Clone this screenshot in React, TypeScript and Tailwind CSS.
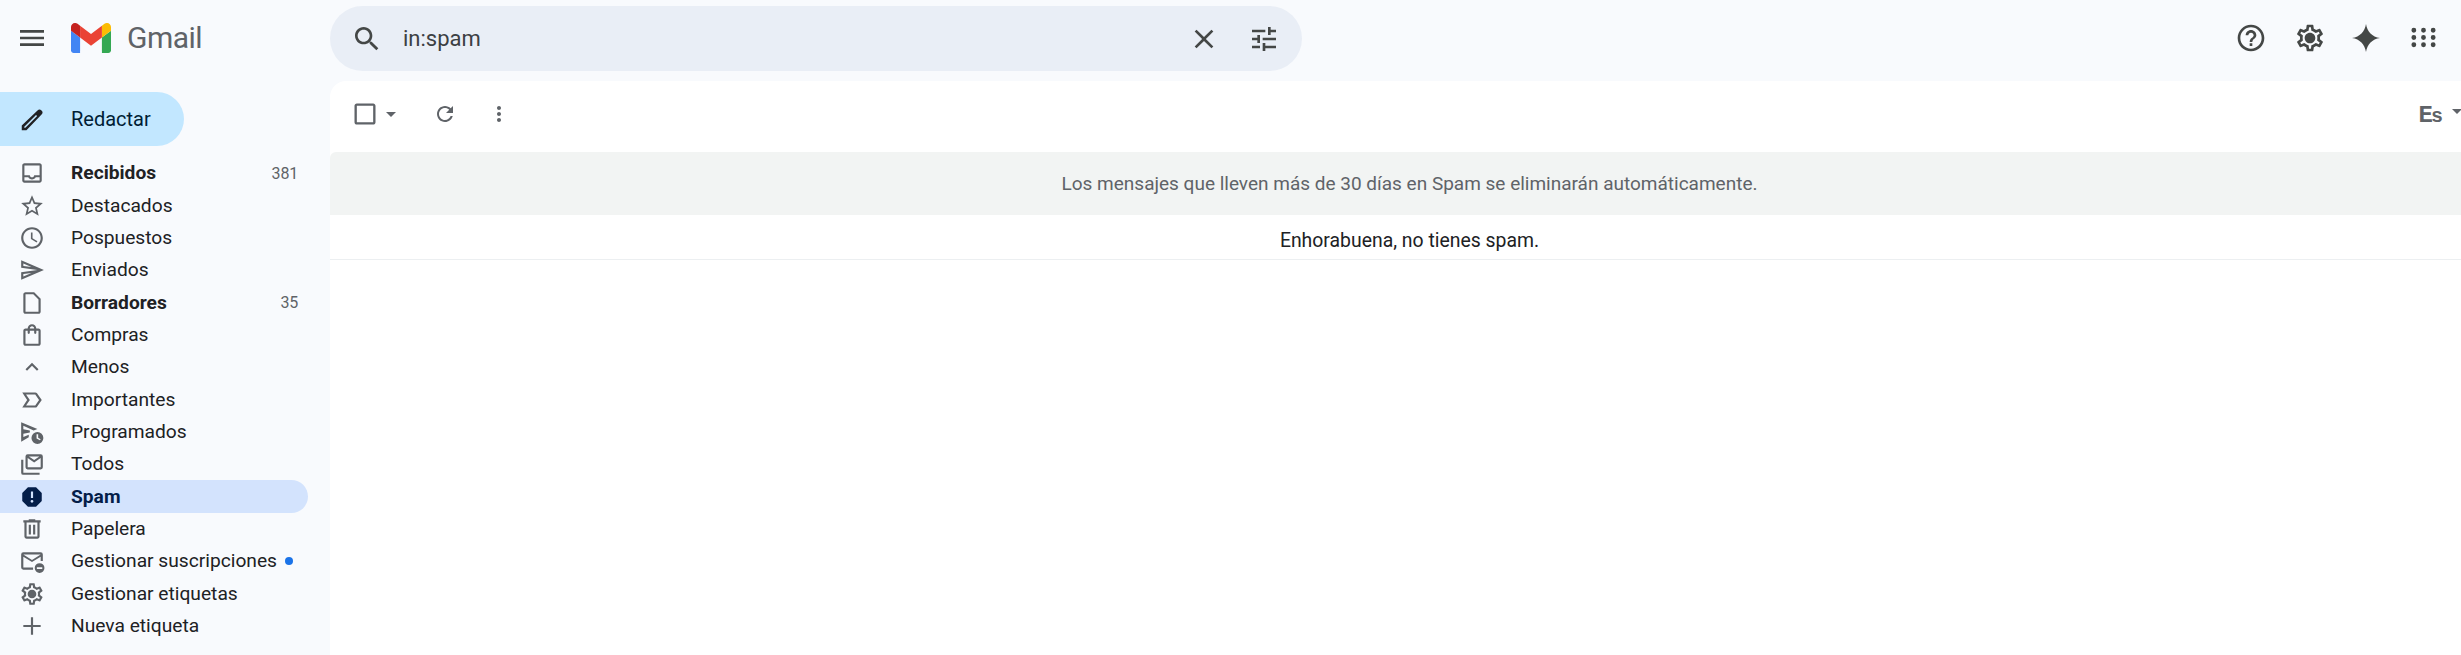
import React from 'react';

const ICONS = {
  menu: 'M3 18h18v-2H3v2zm0-5h18v-2H3v2zm0-7v2h18V6H3z',
  search: 'M15.5 14h-.79l-.28-.27C15.41 12.59 16 11.11 16 9.5 16 5.91 13.09 3 9.5 3S3 5.91 3 9.5 5.91 16 9.5 16c1.61 0 3.09-.59 4.23-1.57l.27.28v.79l5 4.99L20.49 19l-4.99-5zm-6 0C7.01 14 5 11.99 5 9.5S7.01 5 9.5 5 14 7.01 14 9.5 11.99 14 9.5 14z',
  close: 'M19 6.41L17.59 5 12 10.59 6.41 5 5 6.41 10.59 12 5 17.59 6.41 19 12 13.41 17.59 19 19 17.59 13.41 12z',
  tune: 'M3 17v2h6v-2H3zM3 5v2h10V5H3zm10 16v-2h8v-2h-8v-2h-2v6h2zM7 9v2H3v2h4v2h2V9H7zm14 4v-2H11v2h10zm-6-4h2V7h4V5h-4V3h-2v6z',
  help: 'M11 18h2v-2h-2v2zm1-16C6.48 2 2 6.48 2 12s4.48 10 10 10 10-4.48 10-10S17.52 2 12 2zm0 18c-4.41 0-8-3.59-8-8s3.59-8 8-8 8 3.59 8 8-3.59 8-8 8zm0-14c-2.21 0-4 1.79-4 4h2c0-1.1.9-2 2-2s2 .9 2 2c0 2-3 1.75-3 5h2c0-2.25 3-2.5 3-5 0-2.21-1.79-4-4-4z',
  gear: 'M19.43 12.98c.04-.32.07-.64.07-.98 0-.34-.03-.66-.07-.98l2.11-1.65c.19-.15.24-.42.12-.64l-2-3.46c-.09-.16-.26-.25-.44-.25-.06 0-.12.01-.17.03l-2.49 1c-.52-.4-1.08-.73-1.69-.98l-.38-2.65C14.46 2.18 14.25 2 14 2h-4c-.25 0-.46.18-.49.42l-.38 2.65c-.61.25-1.17.59-1.69.98l-2.49-1c-.06-.02-.12-.03-.18-.03-.17 0-.34.09-.43.25l-2 3.46c-.13.22-.07.49.12.64l2.11 1.65c-.04.32-.07.65-.07.98 0 .33.03.66.07.98l-2.11 1.65c-.19.15-.24.42-.12.64l2 3.46c.09.16.26.25.44.25.06 0 .12-.01.17-.03l2.49-1c.52.4 1.08.73 1.69.98l.38 2.65c.03.24.24.42.49.42h4c.25 0 .46-.18.49-.42l.38-2.65c.61-.25 1.17-.59 1.69-.98l2.49 1c.06.02.12.03.18.03.17 0 .34-.09.43-.25l2-3.46c.12-.22.07-.49-.12-.64l-2.11-1.65zm-1.98-1.71c.04.31.05.52.05.73 0 .21-.02.43-.05.73l-.14 1.13.89.7 1.08.84-.7 1.21-1.27-.51-1.04-.42-.9.68c-.43.32-.84.56-1.25.73l-1.06.43-.16 1.13-.2 1.35h-1.4l-.19-1.35-.16-1.13-1.06-.43c-.43-.18-.83-.41-1.23-.71l-.91-.7-1.06.43-1.27.51-.7-1.21 1.08-.84.89-.7-.14-1.13c-.03-.31-.05-.54-.05-.74s.02-.43.05-.73l.14-1.13-.89-.7-1.08-.84.7-1.21 1.27.51 1.04.42.9-.68c.43-.32.84-.56 1.25-.73l1.06-.43.16-1.13.2-1.35h1.39l.19 1.35.16 1.13 1.06.43c.43.18.83.41 1.23.71l.91.7 1.06-.43 1.27-.51.7 1.21-1.07.85-.89.7.14 1.13zM12 8c-2.21 0-4 1.79-4 4s1.79 4 4 4 4-1.79 4-4-1.79-4-4-4z',
  spark: 'M12 1.500c.9 5.900 4.600 9.600 10.500 10.500-5.900.9-9.600 4.600-10.500 10.500-.9-5.900-4.600-9.600-10.500-10.500C7.400 11.100 11.100 7.400 12 1.500z',
  apps: 'M4 8a2 2 0 1 0 0-4 2 2 0 0 0 0 4zm8 0a2 2 0 1 0 0-4 2 2 0 0 0 0 4zm8 0a2 2 0 1 0 0-4 2 2 0 0 0 0 4zM4 14a2 2 0 1 0 0-4 2 2 0 0 0 0 4zm8 0a2 2 0 1 0 0-4 2 2 0 0 0 0 4zm8 0a2 2 0 1 0 0-4 2 2 0 0 0 0 4zM4 20a2 2 0 1 0 0-4 2 2 0 0 0 0 4zm8 0a2 2 0 1 0 0-4 2 2 0 0 0 0 4zm8 0a2 2 0 1 0 0-4 2 2 0 0 0 0 4z',
  pencil: 'M3 21v-3.750L15.600 5.150a2.200 2.200 0 0 1 3.150 0l.1.1a2.200 2.200 0 0 1 0 3.150L6.750 21H3zm2-2h.9L15.300 9.600l-.9-.9L5 18.100v.9z',
  inbox: 'M19 3H5c-1.1 0-2 .9-2 2v14c0 1.1.9 2 2 2h14c1.1 0 2-.9 2-2V5c0-1.1-.9-2-2-2zm0 16H5v-3h3.56c.69 1.19 1.97 2 3.45 2s2.75-.81 3.45-2H19v3zm0-5h-4.99c0 1.1-.9 2-2 2s-2-.9-2-2H5V5h14v9z',
  star: 'M22 9.24l-7.19-.62L12 2 9.19 8.63 2 9.24l5.46 4.73L5.82 21 12 17.27 18.18 21l-1.63-7.03L22 9.24zM12 15.4l-3.76 2.27 1-4.28-3.32-2.88 4.38-.38L12 6.1l1.71 4.04 4.38.38-3.32 2.88 1 4.28L12 15.4z',
  clock: 'M11.99 2C6.47 2 2 6.48 2 12s4.47 10 9.99 10C17.52 22 22 17.52 22 12S17.52 2 11.99 2zM12 20c-4.42 0-8-3.58-8-8s3.58-8 8-8 8 3.58 8 8-3.58 8-8 8zm.5-13H11v6l5.25 3.15.75-1.23-4.5-2.67z',
  send: 'M4.01 6.03l7.51 3.22-7.52-1 .01-2.22m7.5 8.72L4 17.97v-2.22l7.51-1M2.01 3L2 10l15 2-15 2 .01 7L23 12 2.01 3z',
  draft: 'M14 2H6c-1.1 0-2 .9-2 2v16c0 1.1.9 2 2 2h12c1.1 0 2-.9 2-2V8l-6-6zm4 18H6V4h7.17L18 8.83V20z',
  bag: 'M18 6h-2c0-2.21-1.79-4-4-4S8 3.79 8 6H6c-1.1 0-2 .9-2 2v12c0 1.1.9 2 2 2h12c1.1 0 2-.9 2-2V8c0-1.1-.9-2-2-2zm-6-2c1.1 0 2 .9 2 2h-4c0-1.1.9-2 2-2zm6 16H6V8h2v2c0 .55.45 1 1 1s1-.45 1-1V8h4v2c0 .55.45 1 1 1s1-.45 1-1V8h2v12z',
  less: 'M12 8l-6 6 1.41 1.41L12 10.83l4.59 4.58L18 14z',
  label: 'M15 19H3l4.5-7L3 5h12c.65 0 1.26.31 1.63.84L21 12l-4.37 6.16c-.37.52-.98.84-1.63.84zm-8.5-2H15l3.5-5L15 7H6.5l3.5 5-3.5 5z',
  scheduled: 'M2 3l15 6.300-3.500 1.200L4 6.300v3.100l6 1.200v1.800l-6 1.200v3.100l5-2.100v2.200L2 21V3zM17 12a5.500 5.500 0 1 0 0 11 5.500 5.500 0 0 0 0-11zm-.8 2h1.500v3.200l2.300 1.400-.7 1.100-3.100-1.800V14z',
  all: 'M2 8h2v12h15v2H4a2 2 0 0 1-2-2V8zm6-5h12a2 2 0 0 1 2 2v10a2 2 0 0 1-2 2H8a2 2 0 0 1-2-2V5a2 2 0 0 1 2-2zm0 3.500V15h12V6.500l-6 4.200-6-4.200zM9.200 5l4.800 3.400L18.800 5H9.200z',
  spam: 'M15.73 3H8.27L3 8.27v7.46L8.27 21h7.46L21 15.73V8.270L15.730 3zM12 17.300c-.72 0-1.300-.58-1.300-1.300 0-.72.58-1.300 1.300-1.300.72 0 1.300.58 1.300 1.300 0 .72-.58 1.300-1.300 1.300zm1-4.300h-2V7h2v6z',
  trash: 'M15 4V3H9v1H4v2h1v13c0 1.100.9 2 2 2h10c1.100 0 2-.9 2-2V6h1V4h-5zm2 15H7V6h10v13zM9 8h2v9H9zm4 0h2v9h-2z',
  unsub: 'M20 4H4a2 2 0 0 0-2 2v12a2 2 0 0 0 2 2h9v-2H4V8l8 5 8-5v4h2V6a2 2 0 0 0-2-2zm-8 7L4 6h16l-8 5zM19 14a4.500 4.500 0 1 0 0 9 4.500 4.500 0 0 0 0-9zm-2.500 3.700h5v1.600h-5v-1.600z',
  plus: 'M20 13h-7v7h-2v-7H4v-2h7V4h2v7h7v2z',
  refresh: 'M17.650 6.350C16.200 4.900 14.210 4 12 4c-4.420 0-7.990 3.580-7.990 8s3.570 8 7.990 8c3.730 0 6.840-2.550 7.730-6h-2.080c-.82 2.330-3.040 4-5.650 4-3.310 0-6-2.690-6-6s2.690-6 6-6c1.660 0 3.140.69 4.220 1.780L13 11h7V4l-2.350 2.350z',
  dots: 'M12 8c1.100 0 2-.9 2-2s-.9-2-2-2-2 .9-2 2 .9 2 2 2zm0 2c-1.100 0-2 .9-2 2s.9 2 2 2 2-.9 2-2-.9-2-2-2zm0 6c-1.100 0-2 .9-2 2s.9 2 2 2 2-.9 2-2-.9-2-2-2z',
  caret: 'M7 10l5 5 5-5z',
  checkbox: 'M19 5v14H5V5h14m0-2H5c-1.100 0-2 .9-2 2v14c0 1.100.9 2 2 2h14c1.100 0 2-.9 2-2V5c0-1.100-.9-2-2-2z',
};

type IconName = keyof typeof ICONS;

const EVEN_ODD: IconName[] = ['pencil', 'scheduled', 'all', 'unsub'];

const Icon = ({ name, className }: { name: IconName; className?: string }) => (
  <svg viewBox="0 0 24 24" fill="currentColor" className={className}>
    <path d={ICONS[name]} fillRule={EVEN_ODD.includes(name) ? 'evenodd' : undefined} />
  </svg>
);

interface NavItem {
  icon: IconName;
  label: string;
  count?: string;
  bold?: boolean;
  active?: boolean;
  dot?: boolean;
}

const NAV: NavItem[] = [
  { icon: 'inbox', label: 'Recibidos', count: '381', bold: true },
  { icon: 'star', label: 'Destacados' },
  { icon: 'clock', label: 'Pospuestos' },
  { icon: 'send', label: 'Enviados' },
  { icon: 'draft', label: 'Borradores', count: '35', bold: true },
  { icon: 'bag', label: 'Compras' },
  { icon: 'less', label: 'Menos' },
  { icon: 'label', label: 'Importantes' },
  { icon: 'scheduled', label: 'Programados' },
  { icon: 'all', label: 'Todos' },
  { icon: 'spam', label: 'Spam', bold: true, active: true },
  { icon: 'trash', label: 'Papelera' },
  { icon: 'unsub', label: 'Gestionar suscripciones', dot: true },
  { icon: 'gear', label: 'Gestionar etiquetas' },
  { icon: 'plus', label: 'Nueva etiqueta' },
];

const GmailLogo = () => (
  <svg viewBox="52 42 88 66" className="w-[40px] h-[30px]">
    <path fill="#4285f4" d="M58 108h14V74L52 59v43c0 3.320 2.690 6 6 6" />
    <path fill="#34a853" d="M120 108h14c3.320 0 6-2.690 6-6V59l-20 15" />
    <path fill="#fbbc04" d="M120 48v26l20-15v-8c0-7.420-8.470-11.650-14.400-7.200" />
    <path fill="#ea4335" d="M72 74V48l24 18 24-18v26L96 92" />
    <path fill="#c5221f" d="M52 51v8l20 15V48l-5.600-4.200c-5.940-4.450-14.400-.22-14.400 7.200" />
  </svg>
);

const NavRow = ({ item }: { item: NavItem }) => (
  <div
    className={`flex items-center h-[32.35px] w-[308px] rounded-r-full pl-[19px] pr-[11px] text-[19.2px] ${
      item.active ? 'bg-[#d3e3fd] text-[#041e49]' : 'text-[#202124]'
    } ${item.bold ? 'font-bold' : ''}`}
  >
    <Icon
      name={item.icon}
      className={`w-[26px] h-[26px] shrink-0 ${item.active ? 'text-[#041e49]' : 'text-[#5f6368]'}`}
    />
    <span className="ml-[26px] pt-[1px] whitespace-nowrap">{item.label}</span>
    {item.dot && <span className="ml-[8px] w-[8px] h-[8px] rounded-full bg-[#1a73e8]" />}
    {item.count && (
      <span className="ml-auto mr-[-1px] pt-[1px] text-[16px] font-normal text-[#5f6368] tracking-[-0.2px]">{item.count}</span>
    )}
  </div>
);

export default function App() {
  return (
    <div className="w-[2461px] h-[655px] overflow-hidden bg-[#f8fafd] flex flex-col font-['Roboto',sans-serif] text-[#202124]">
      <header className="h-[81px] shrink-0 flex items-start">
        <div className="w-[330px] h-[75px] flex items-center shrink-0">
          <Icon name="menu" className="w-[32px] h-[32px] ml-[16px] text-[#444746]" />
          <div className="ml-[23px]">
            <GmailLogo />
          </div>
          <span className="ml-[16px] pt-[1px] text-[30px] leading-none text-[#5f6368] tracking-[-0.5px]">Gmail</span>
        </div>
        <div className="mt-[6px] w-[972px] h-[65px] rounded-full bg-[#e9eef6] flex items-center pl-[21px] pr-[22px]">
          <Icon name="search" className="w-[32px] h-[32px] text-[#444746]" />
          <span className="ml-[20px] text-[22px] text-[#3c4043]">in:spam</span>
          <Icon name="close" className="ml-auto w-[32px] h-[32px] text-[#444746]" />
          <Icon name="tune" className="ml-[28px] w-[32px] h-[32px] text-[#444746]" />
        </div>
        <div className="ml-auto h-[75px] flex items-center pr-[23px] text-[#444746]">
          <Icon name="help" className="w-[32px] h-[32px]" />
          <Icon name="gear" className="ml-[27px] w-[32px] h-[32px]" />
          <Icon name="spark" className="ml-[24px] w-[32px] h-[32px]" />
          <Icon name="apps" className="ml-[27px] w-[29px] h-[29px]" />
        </div>
      </header>

      <div className="flex flex-1 min-h-0">
        <aside className="w-[330px] shrink-0 flex flex-col">
          <div className="mt-[11px] w-[184px] h-[54px] rounded-r-[27px] bg-[#c2e7ff] flex items-center pl-[18px] text-[20px] text-[#001d35]">
            <Icon name="pencil" className="w-[30px] h-[30px] text-[#202124]" />
            <span className="ml-[23px]">Redactar</span>
          </div>
          <nav className="mt-[11px] flex flex-col">
            {NAV.map(item => (
              <NavRow key={item.label} item={item} />
            ))}
          </nav>
        </aside>

        <main className="flex-1 min-w-0 bg-white rounded-tl-[16px] flex flex-col">
          <div className="h-[71px] shrink-0 flex items-center pb-[6px] pl-[21px] text-[#5f6368]">
            <Icon name="checkbox" className="w-[28px] h-[28px]" />
            <Icon name="caret" className="w-[24px] h-[24px]" />
            <Icon name="refresh" className="ml-[30px] w-[24px] h-[24px]" />
            <Icon name="dots" className="ml-[30px] w-[24px] h-[24px]" />
            <span className="ml-auto pt-[4px] flex items-baseline font-['Liberation_Mono',monospace] font-bold text-[#5f6368]">
              <span className="text-[24px] leading-none">E</span>
              <span className="text-[20px] leading-none ml-[-2px]">s</span>
            </span>
            <Icon name="caret" className="ml-[2px] mb-[6px] w-[24px] h-[24px] mr-[-8px] text-[#5f6368]" />
          </div>
          <div className="h-[63px] shrink-0 pl-[28px] pt-[1px] bg-[#f2f4f3] rounded-tl-[6px] flex items-center justify-center text-[19px] text-[#5f6368]">
            Los mensajes que lleven más de 30 días en Spam se eliminarán automáticamente.
          </div>
          <div className="h-[45px] shrink-0 pl-[28px] pt-[8px] border-b border-[#eceff1] flex items-center justify-center text-[19.4px] text-[#202124]">
            Enhorabuena, no tienes spam.
          </div>
        </main>
      </div>
    </div>
  );
}
